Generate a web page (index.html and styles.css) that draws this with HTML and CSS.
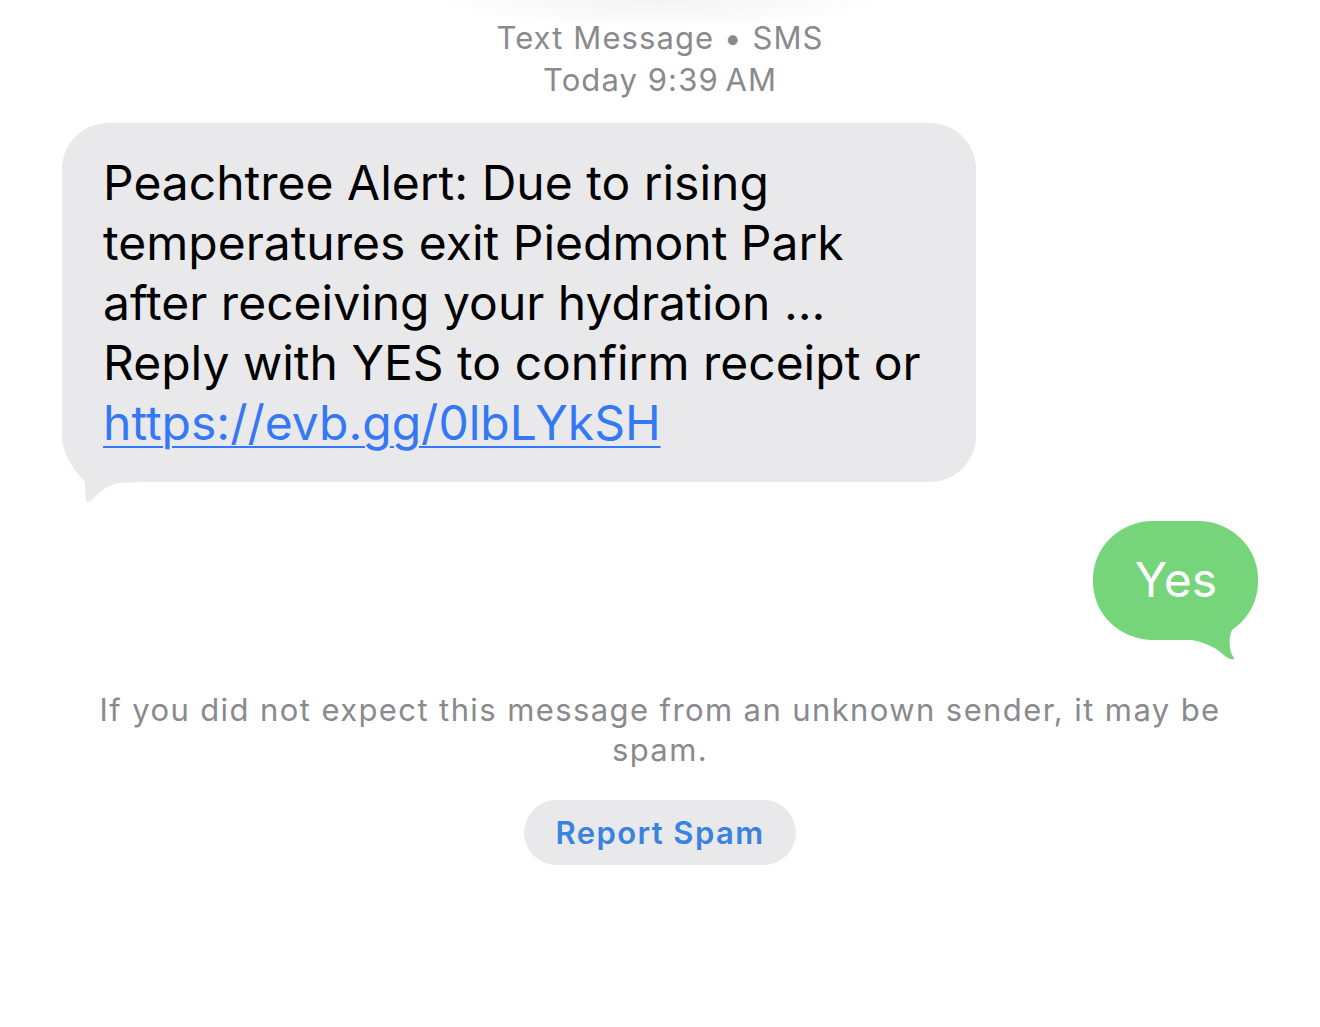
FILE: index.html
```html
<!DOCTYPE html>
<html lang="en">
<head>
<meta charset="utf-8">
<title>Text Message</title>
<link rel="stylesheet" href="styles.css">
</head>
<body>
<main class="thread">
  <header class="meta">
    <div class="meta-line">Text Message • SMS</div>
    <div class="meta-line">Today 9:39&#8239;AM</div>
  </header>

  <div class="row row-in">
    <div class="bubble bubble-in">
      <svg class="tail tail-in" width="80" height="90" viewBox="0 0 80 90" aria-hidden="true">
        <path d="M1 0 L1 16 C1 40 12 58 22 66 C24 72 23 80 24 86 C25 89 28 88 31 85 C36 79 44 72 56 69 L80 68 L80 0 Z" fill="#e9e9eb"/>
      </svg>
      Peachtree Alert: Due to rising<br>
      temperatures exit Piedmont Park<br>
      after receiving your hydration ...<br>
      Reply with YES to confirm receipt or<br>
      <a class="link" href="#">https://evb.gg/0lbLYkSH</a>
    </div>
  </div>

  <div class="row row-out">
    <div class="bubble bubble-out">
      <svg class="tail tail-out" width="80" height="80" viewBox="0 0 80 80" aria-hidden="true">
        <path d="M70 20 C66 34 56 44 50 50 C47 56 47 66 49 72 C50 76 53 78 52 79 C49 80 46 78 43 76 C37 70 26 63 10 60 L0 60 L0 20 Z" fill="#76d57b"/>
      </svg>
      Yes
    </div>
  </div>

  <p class="notice">If you did not expect this message from an unknown sender, it may be spam.</p>

  <div class="actions">
    <button class="report" type="button">Report Spam</button>
  </div>
</main>
</body>
</html>
```

FILE: styles.css
```css
html, body {
  margin: 0;
  padding: 0;
  background: #ffffff;
}

body {
  font-family: Inter, "Noto Sans", "Liberation Sans", sans-serif;
  -webkit-font-smoothing: antialiased;
}

.thread {
  position: relative;
  display: flex;
  flex-direction: column;
  width: 1320px;
  min-height: 1027px;
  overflow: hidden;
}

.thread::before {
  content: "";
  position: absolute;
  left: 420px;
  top: -40px;
  width: 480px;
  height: 70px;
  background: radial-gradient(ellipse at center, rgba(0,0,0,0.05) 0%, rgba(0,0,0,0.02) 45%, rgba(0,0,0,0) 70%);
  pointer-events: none;
}

.meta {
  padding-top: 17px;
  text-align: center;
  color: #8a8a8e;
  font-size: 31px;
  line-height: 42px;
  letter-spacing: 1.1px;
}

.row {
  display: flex;
}

.row-in {
  justify-content: flex-start;
  padding-left: 62px;
  margin-top: 22px;
}

.row-out {
  justify-content: flex-end;
  padding-right: 62px;
  margin-top: 39px;
}

.bubble {
  position: relative;
  z-index: 0;
  font-size: 48px;
  line-height: 60px;
}

.bubble-in {
  width: 914px;
  box-sizing: border-box;
  padding: 30px 20px 29px 41px;
  background: #e9e9eb;
  color: #000;
  border-radius: 46px;
}

.link {
  color: #3478f6;
  text-decoration: underline;
  text-decoration-thickness: 2px;
  text-underline-offset: 6px;
}

.bubble-out {
  padding: 29px 41px 30px 42px;
  background: #76d57b;
  color: #ffffff;
  border-radius: 60px / 58px;
}

.tail {
  position: absolute;
  z-index: -1;
  display: block;
}

.tail-in {
  left: 0;
  bottom: -22px;
}

.tail-out {
  right: -4px;
  bottom: -20px;
}

.notice {
  margin: 50px 80px 0;
  text-align: center;
  color: #8a8a8e;
  font-size: 31px;
  line-height: 40px;
  letter-spacing: 1.4px;
}

.actions {
  display: flex;
  justify-content: center;
  margin-top: 30px;
}

.report {
  width: 272px;
  height: 65px;
  border: none;
  border-radius: 33px;
  background: #e9e9eb;
  color: #3a82e0;
  font-family: Inter, "Noto Sans", "Liberation Sans", sans-serif;
  font-size: 31px;
  font-weight: 600;
  letter-spacing: 1.4px;
  padding: 0;
  cursor: pointer;
}
```
